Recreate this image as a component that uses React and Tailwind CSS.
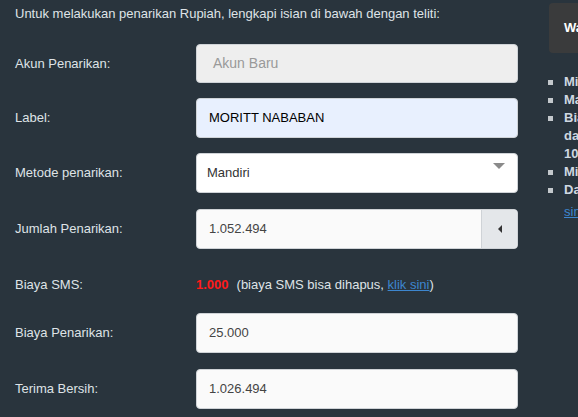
const Label = ({ children }) => (
  <div className="w-[181px] shrink-0 text-[13px] text-[#dfe3e7]">{children}</div>
);

const Field = ({ value, className = "" }) => (
  <div
    className={`flex h-10 w-[322px] items-center rounded-[4px] border border-[#cfd3d7] bg-[#fafafa] pl-[12px] text-[13px] text-[#444] ${className}`}
  >
    {value}
  </div>
);

const Item = ({ children }) => (
  <li className="flex">
    <span className="mt-[7px] mr-[11px] h-[5px] w-[5px] shrink-0 bg-[#c3c8cc]" />
    <div>{children}</div>
  </li>
);

export default function App() {
  return (
    <div className="h-[417px] w-[578px] overflow-hidden bg-[#29343d] font-['Liberation_Sans',Arial,sans-serif]">
      <div className="flex w-[900px] pl-[15px]">
        {/* Left - form */}
        <div className="flex w-[533px] shrink-0 flex-col">
          <p className="mt-[5px] h-[18px] text-[13px] leading-[18px] text-[#dfe3e7]">
            Untuk melakukan penarikan Rupiah, lengkapi isian di bawah dengan teliti:
          </p>

          <div className="mt-[21px] flex items-center">
            <Label>Akun Penarikan:</Label>
            <div className="flex h-[39px] w-[322px] items-center rounded-[4px] border border-[#cfd3d7] bg-[#eeeeee] pl-[16px] text-[14px] text-[#999]">
              Akun Baru
            </div>
          </div>

          <div className="mt-[15px] flex items-center">
            <Label>Label:</Label>
            <Field value="MORITT NABABAN" className="!bg-[#e8f0fe] !text-black" />
          </div>

          <div className="mt-[15px] flex items-center">
            <Label>Metode penarikan:</Label>
            <div className="relative flex h-10 w-[322px] items-center rounded-[4px] border border-[#cfd3d7] bg-white pl-[10px] text-[13px] text-[#333]">
              Mandiri
              <span className="absolute right-[12px] top-[9px] h-0 w-0 border-x-[6px] border-t-[6px] border-x-transparent border-t-[#8a8a8a]" />
            </div>
          </div>

          <div className="mt-[16px] flex items-center">
            <Label>Jumlah Penarikan:</Label>
            <div className="flex h-10 w-[322px] overflow-hidden rounded-[4px] border border-[#cfd3d7] bg-[#fafafa] text-[13px] text-[#444]">
              <div className="flex flex-1 items-center pl-[12px]">1.052.494</div>
              <div className="flex w-[36px] items-center justify-center border-l border-[#cfd3d7] bg-[#e4e7ea]">
                <span className="h-0 w-0 border-y-[4px] border-r-[4px] border-y-transparent border-r-[#333]" />
              </div>
            </div>
          </div>

          <div className="mt-[16px] flex h-[40px] items-center">
            <Label>Biaya SMS:</Label>
            <div className="text-[13px] text-[#dfe3e7]">
              <span className="font-bold text-[#ff1a1a]">1.000</span>
              <span className="ml-[8px]">
                (biaya SMS bisa dihapus,{" "}
                <a className="text-[#3d86cf] underline">klik sini</a>)
              </span>
            </div>
          </div>

          <div className="mt-[8px] flex items-center">
            <Label>Biaya Penarikan:</Label>
            <Field value="25.000" />
          </div>

          <div className="mt-[16px] flex items-center">
            <Label>Terima Bersih:</Label>
            <Field value="1.026.494" />
          </div>
        </div>

        {/* Right - info */}
        <div className="w-[300px] shrink-0 pt-[3px]">
          <div className="ml-[1px] flex h-[50px] items-center rounded-[4px] bg-[#3a3b3c] pl-[15px] text-[13px] font-bold text-white">
            Waktu Proses Penarikan
          </div>
          <ul className="mt-[20px] text-[13px] font-bold leading-[18px] text-[#cfd8e1]">
            <Item>Minimal penarikan Rp 50.000</Item>
            <Item>Maksimal penarikan Rp 100.000.000</Item>
            <Item>
              Biaya penarikan Rp 25.000
              <br />
              dari jumlah penarikan
              <br />
              10.000
            </Item>
            <Item>Minimal saldo tersisa Rp 0</Item>
            <Item>
              Data rekening dapat diubah
              <br />
              <a className="mt-[4px] inline-block font-normal text-[#3d86cf] underline">sini</a>
            </Item>
          </ul>
        </div>
      </div>
    </div>
  );
}
